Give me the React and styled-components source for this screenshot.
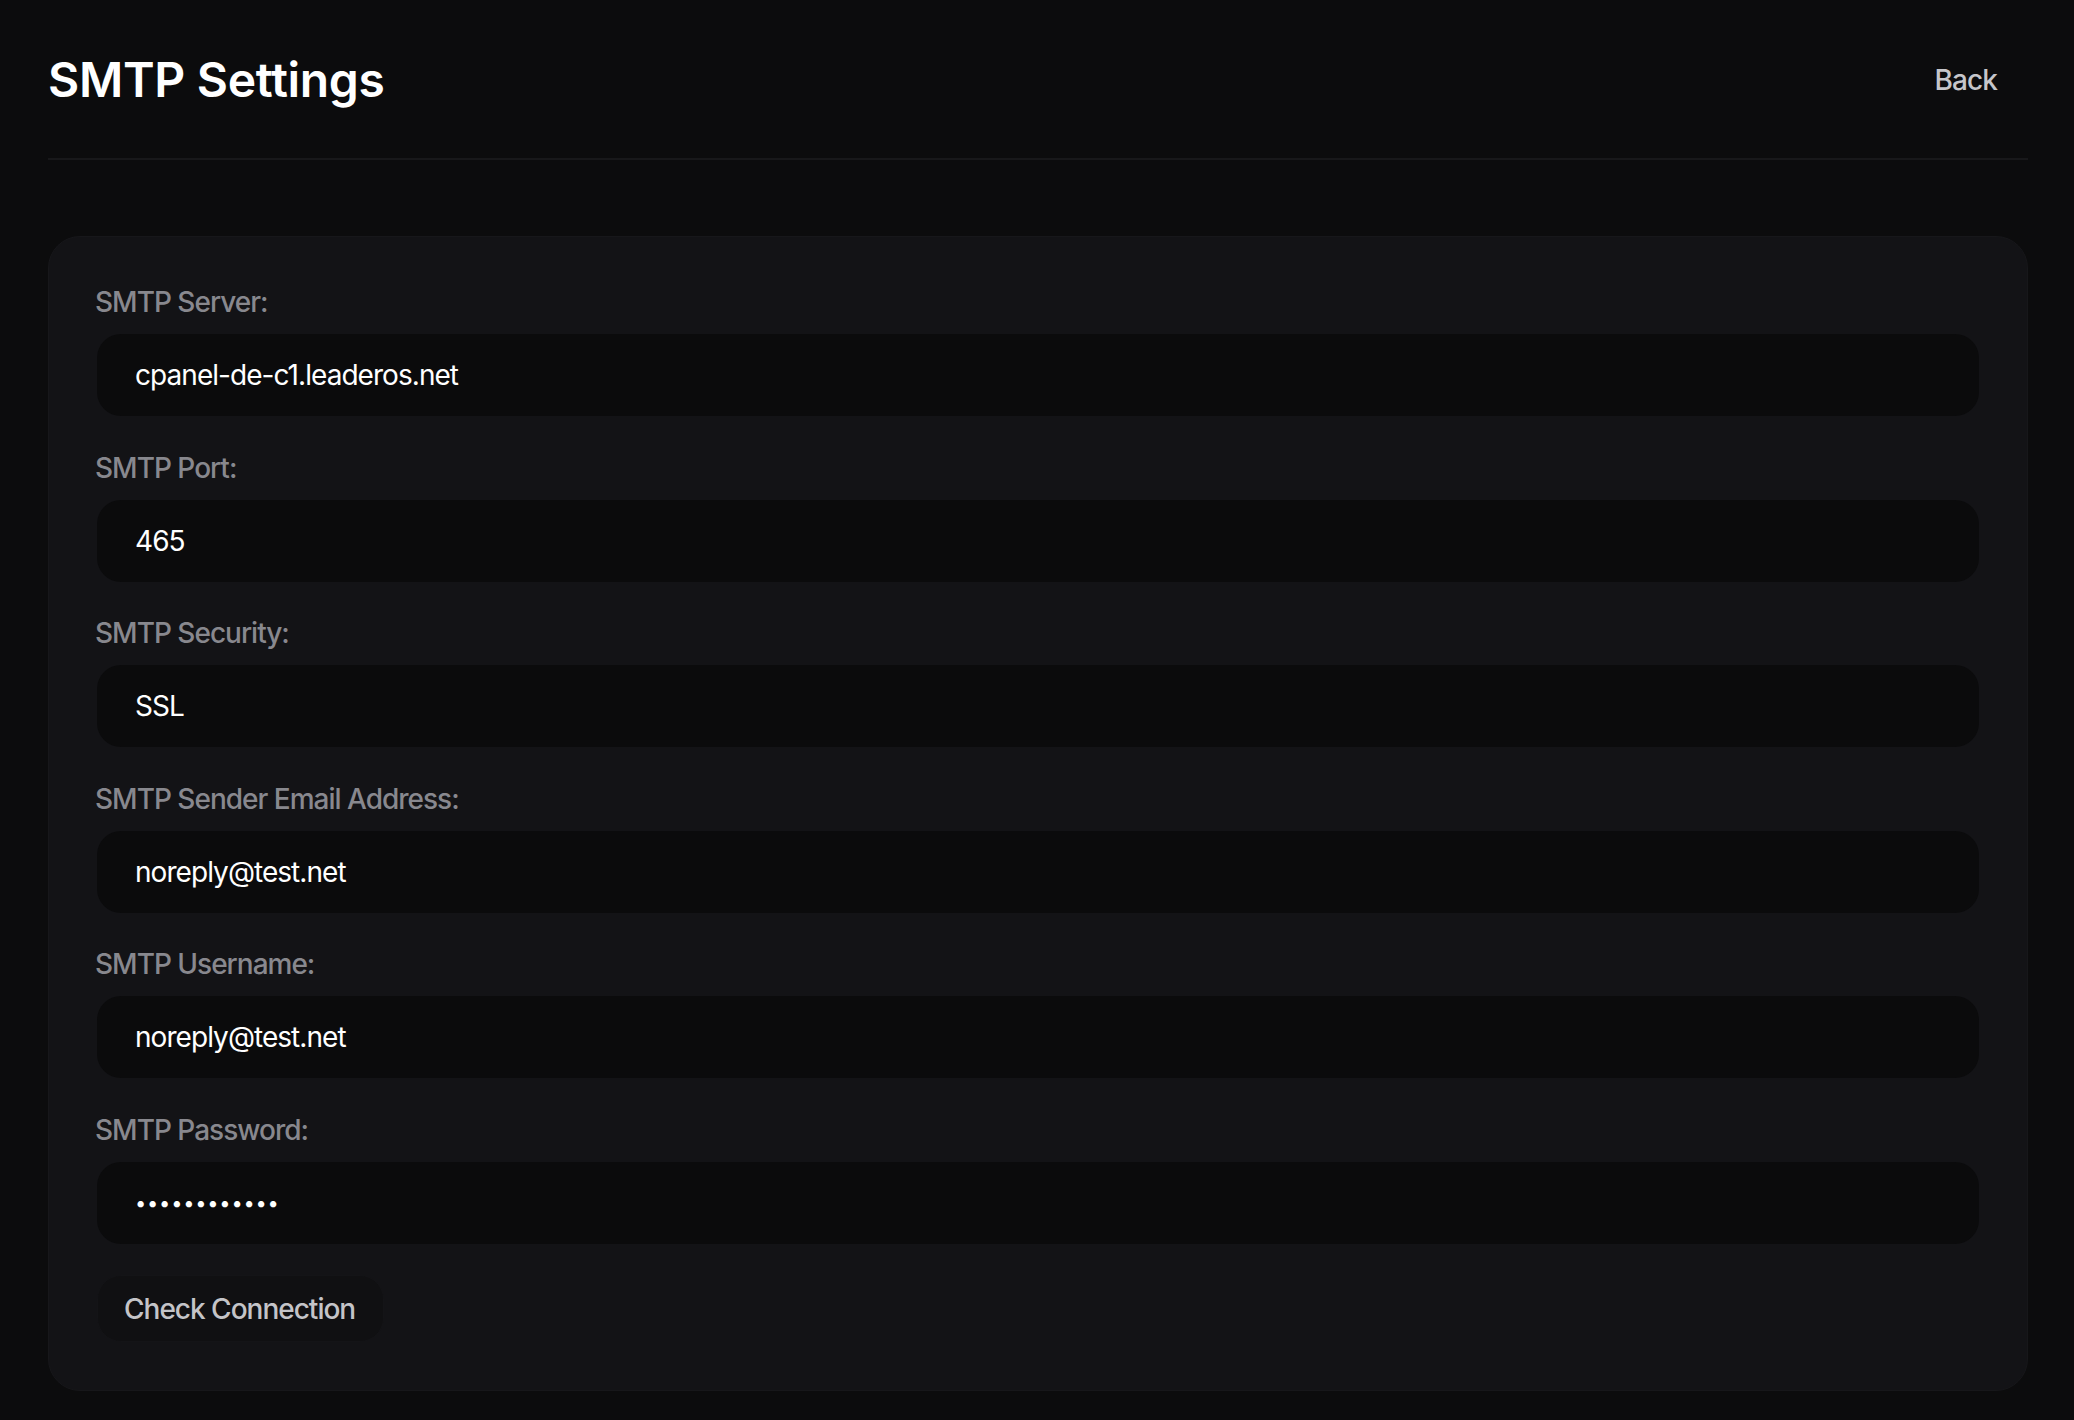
import React from "react";
import styled, { createGlobalStyle } from "styled-components";

const GlobalStyle = createGlobalStyle`
  html, body {
    margin: 0;
    padding: 0;
    background: #0c0c0d;
    overflow: hidden;
  }
  body {
    font-family: Inter, "Noto Sans", "Liberation Sans", sans-serif;
    color: #ffffff;
    -webkit-font-smoothing: antialiased;
  }
  * { box-sizing: border-box; }
`;

const Page = styled.div`
  padding: 47px 46px 0 48px;
  min-height: 1420px;
  display: flex;
  flex-direction: column;
`;

const Header = styled.header`
  display: flex;
  align-items: center;
  justify-content: space-between;
  padding-bottom: 45px;
  border-bottom: 2px solid #18181a;
`;

const Title = styled.h1`
  margin: 0;
  font-size: 48px;
  line-height: 64px;
  font-weight: 600;
  letter-spacing: -0.3px;
  color: #ffffff;
`;

const GhostButton = styled.button`
  height: 66px;
  padding: 0 31px;
  border: none;
  border-radius: 24px;
  background: transparent;
  color: #c6c6ca;
  font-family: inherit;
  font-size: 28px;
  font-weight: 500;
  letter-spacing: -0.9px;
  cursor: pointer;
`;

const Cards = styled.div`
  margin-top: 76px;
  display: flex;
  flex-direction: column;
  gap: 29px;
`;

const Card = styled.section`
  background: #131316;
  border: 1px solid #17171a;
  border-radius: 32px;
  padding: 45px 48px 48px;
  display: flex;
  flex-direction: column;
  gap: 31.5px;
  min-height: ${(p) => p.$minHeight || "auto"};
`;

const Field = styled.div`
  display: flex;
  flex-direction: column;
  gap: 12px;
`;

const Label = styled.label`
  font-size: 28px;
  line-height: 40px;
  font-weight: 500;
  letter-spacing: -1px;
  color: #88888e;
  margin-left: -2px;
`;

const Input = styled.input`
  height: 82px;
  width: 100%;
  padding: 0 38px;
  border: none;
  outline: none;
  border-radius: 24px;
  background: #0b0b0c;
  color: #ffffff;
  font-family: inherit;
  font-size: ${(p) => (p.type === "password" ? "20px" : "28px")};
  font-weight: 400;
  letter-spacing: ${(p) => (p.type === "password" ? "0.8px" : "-0.95px")};
`;

const Actions = styled.div`
  display: flex;
`;

const SecondaryButton = styled.button`
  height: 67px;
  padding: 0 28px 0 26px;
  border: 1px solid #141417;
  border-radius: 24px;
  background: #101012;
  color: #c4c4c8;
  font-family: inherit;
  font-size: 28px;
  font-weight: 500;
  letter-spacing: -1px;
  cursor: pointer;
`;

const fields = [
  { id: "server", label: "SMTP Server:", value: "cpanel-de-c1.leaderos.net" },
  { id: "port", label: "SMTP Port:", value: "465" },
  { id: "security", label: "SMTP Security:", value: "SSL" },
  { id: "sender", label: "SMTP Sender Email Address:", value: "noreply@test.net" },
  { id: "username", label: "SMTP Username:", value: "noreply@test.net" },
  { id: "password", label: "SMTP Password:", value: "testpassword", type: "password" },
];

export default function App() {
  return (
    <>
      <GlobalStyle />
      <Page>
        <Header>
          <Title>SMTP Settings</Title>
          <GhostButton>Back</GhostButton>
        </Header>
        <Cards>
          <Card>
            {fields.map((f) => (
              <Field key={f.id}>
                <Label htmlFor={f.id}>{f.label}</Label>
                <Input id={f.id} type={f.type || "text"} defaultValue={f.value} readOnly />
              </Field>
            ))}
            <Actions>
              <SecondaryButton>Check Connection</SecondaryButton>
            </Actions>
          </Card>
          <Card $minHeight="300px" />
        </Cards>
      </Page>
    </>
  );
}
